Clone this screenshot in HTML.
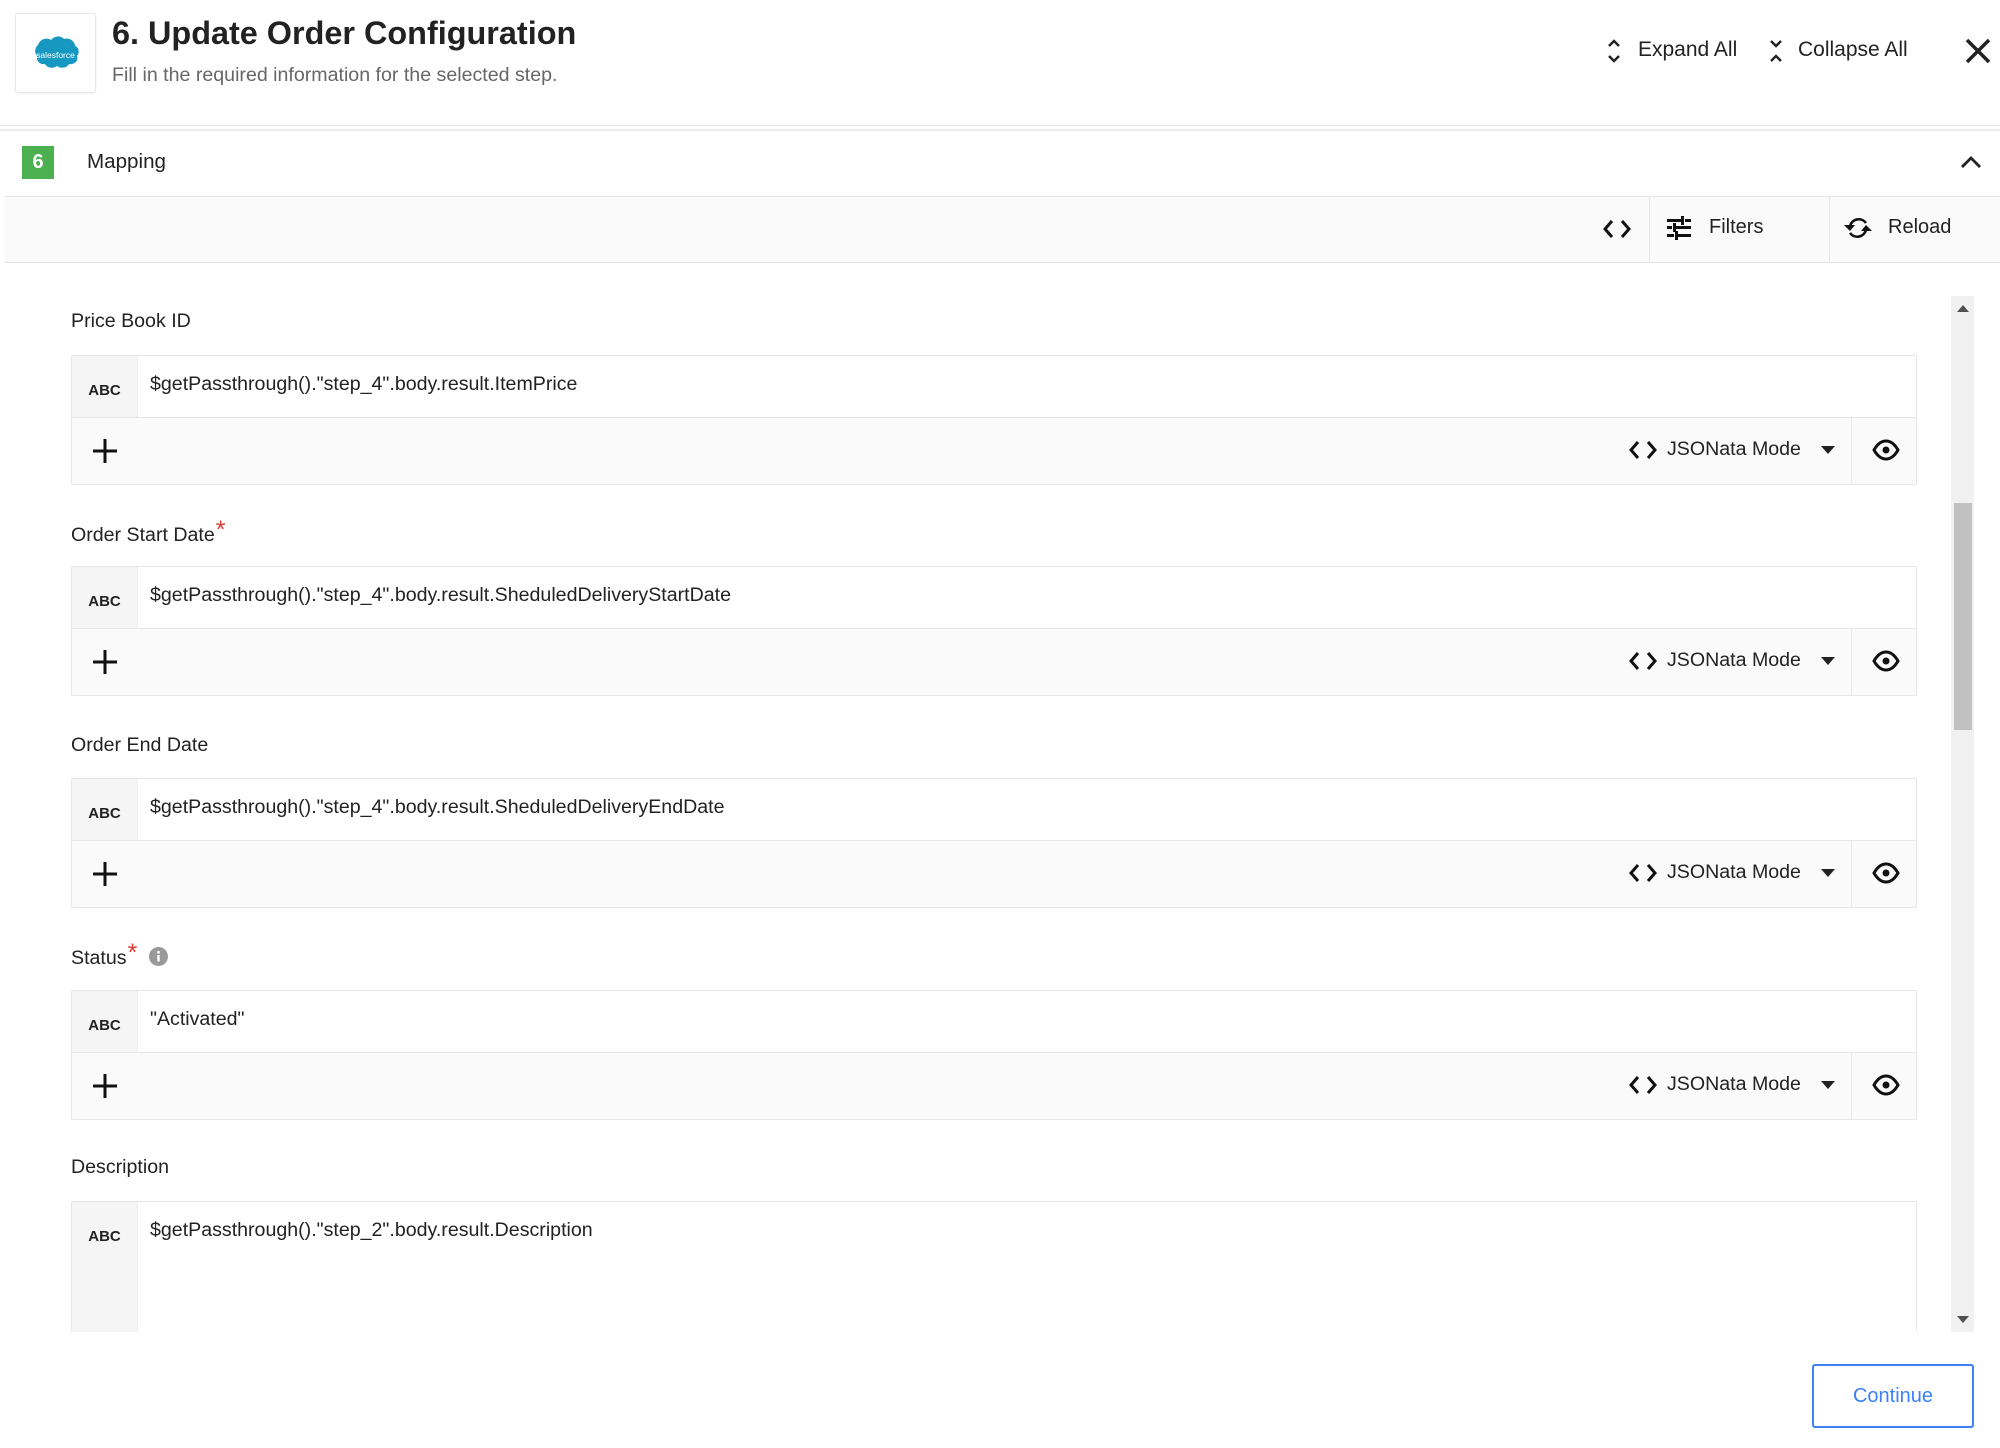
<!DOCTYPE html>
<html><head><meta charset="utf-8"><style>
*{box-sizing:border-box;margin:0;padding:0}
body{width:2000px;height:1448px;background:#fff;font-family:"Liberation Sans",Arial,sans-serif;color:#222;position:relative;overflow:hidden}
.a{position:absolute}
.lbl{position:absolute;left:71px;font-size:19.6px;color:#222;line-height:24px}
.star{color:#e53935;font-size:25px;position:relative;top:-3px;margin-left:1px}
.box{position:absolute;left:71px;width:1846px;border:1px solid #e6e6e6;border-radius:2px;background:#fff}
.inp{height:62px;position:relative;border-bottom:1px solid #e6e6e6}
.abc{position:absolute;left:0;top:0;bottom:0;width:66px;background:#f5f5f5;border-right:1px solid #eee;font-weight:bold;font-size:15px;text-align:center;padding-top:26px;color:#222}
.val{position:absolute;left:78px;top:17px;font-size:19.6px;color:#222}
.bot{height:66px;background:#fafafa;position:relative}
.plus{position:absolute;left:20px;top:20px}
.json{position:absolute;left:1556px;top:20px;font-size:19.6px;color:#222;display:flex;align-items:center}
.div{position:absolute;left:1779px;top:0;bottom:0;border-left:1px solid #eaeaea}
.eye{position:absolute;left:1800px;top:21px}
</style></head><body>
<div class="a" style="left:15px;top:13px;width:81px;height:80px;border:1px solid #e8e8e8;border-radius:3px;box-shadow:0 1px 2px rgba(0,0,0,.06)">
<svg width="79" height="78" viewBox="0 0 79 78"><path d="M22 31c2-6 9-8 13-5 3-4 10-5 13-1 5-2 11 2 11 7 4 1 5 7 2 10 2 5-3 9-8 8-2 4-8 5-12 2-4 3-10 2-12-2-5 1-9-3-8-8-3-3-2-9 1-11z" fill="#1798c1"/><text x="39.5" y="44" font-size="8.5" fill="#fff" text-anchor="middle" font-family="Liberation Sans">salesforce</text></svg></div>
<div class="a" style="left:112px;top:15px;font-size:32.4px;font-weight:bold;color:#222">6. Update Order Configuration</div>
<div class="a" style="left:112px;top:64px;font-size:19.6px;color:#666">Fill in the required information for the selected step.</div>
<svg class="a" style="left:1606px;top:38px" width="16" height="26" viewBox="0 0 16 26"><path d="M3 8l5-5 5 5M3 18l5 5 5-5" stroke="#222" stroke-width="2.4" fill="none"/></svg>
<div class="a" style="left:1638px;top:38px;font-size:21px;color:#222">Expand All</div>
<svg class="a" style="left:1768px;top:38px" width="16" height="26" viewBox="0 0 16 26"><path d="M3 3l5 5 5-5M3 23l5-5 5 5" stroke="#222" stroke-width="2.4" fill="none"/></svg>
<div class="a" style="left:1798px;top:38px;font-size:21px;color:#222">Collapse All</div>
<svg class="a" style="left:1965px;top:38px" width="26" height="26" viewBox="0 0 26 26"><path d="M2 2l22 22M24 2L2 24" stroke="#222" stroke-width="3.5"/></svg>
<div class="a" style="left:0;top:125px;width:2000px;border-top:1px solid #e6e6e6"></div>
<div class="a" style="left:0;top:129px;width:2000px;border-top:2px solid #eee"></div>
<div class="a" style="left:22px;top:146px;width:32px;height:33px;background:#4caf50;color:#fff;font-size:20px;font-weight:bold;text-align:center;line-height:33px">6</div>
<div class="a" style="left:87px;top:150px;font-size:20.6px;color:#222">Mapping</div>
<svg class="a" style="left:1960px;top:154px" width="22" height="16" viewBox="0 0 22 16"><path d="M2 13l9-9 9 9" stroke="#222" stroke-width="2.8" fill="none"/></svg>
<div class="a" style="left:5px;top:196px;width:1995px;height:67px;background:#fafafa;border-top:1px solid #e6e6e6;border-bottom:1px solid #e6e6e6"></div>
<div class="a" style="left:1649px;top:197px;height:65px;border-left:1px solid #e6e6e6"></div>
<div class="a" style="left:1829px;top:197px;height:65px;border-left:1px solid #e6e6e6"></div>
<svg class="a" style="left:1602px;top:218px" width="30" height="22" viewBox="0 0 30 22"><path d="M10 3l-7 8 7 8M20 3l7 8-7 8" stroke="#111" stroke-width="3" fill="none"/></svg>
<svg class="a" style="left:1666px;top:215px" width="26" height="26" viewBox="0 0 26 26" fill="#111"><rect x="1" y="4" width="14" height="3"/><rect x="19" y="4" width="6" height="3"/><rect x="15" y="1" width="3" height="9"/><rect x="1" y="11" width="5" height="3"/><rect x="10" y="11" width="15" height="3"/><rect x="7" y="8" width="3" height="9"/><rect x="1" y="19" width="7" height="3"/><rect x="12" y="19" width="13" height="3"/><rect x="9" y="16" width="3" height="9"/></svg>
<div class="a" style="left:1709px;top:216px;font-size:20px;color:#222">Filters</div>
<svg class="a" style="left:1843px;top:214px" width="30" height="28" viewBox="0 0 30 28"><path d="M7 12a9 9 0 0 1 16-3M23 16a9 9 0 0 1-16 3" stroke="#111" stroke-width="2.6" fill="none"/><path d="M1 11h11l-5 6zM29 17H18l5-6z" fill="#111"/></svg>
<div class="a" style="left:1888px;top:216px;font-size:20px;color:#222">Reload</div>
<div class="a" style="left:0;top:263px;width:2000px;height:1069px;overflow:hidden">
<div class="a" style="left:0;top:-263px;width:2000px;height:1332px">
<div class="lbl" style="top:309px">Price Book ID</div>
<div class="box" style="top:355px"><div class="inp"><div class="abc">ABC</div><div class="val">$getPassthrough()."step_4".body.result.ItemPrice</div></div>
<div class="bot"><svg class="plus" width="26" height="26"><path d="M13 1v24M1 13h24" stroke="#111" stroke-width="3"/></svg><div class="json"><svg width="30" height="22" viewBox="0 0 30 22"><path d="M10 3l-7 8 7 8M20 3l7 8-7 8" stroke="#111" stroke-width="3" fill="none"/></svg><span style="margin-left:9px">JSONata Mode</span><svg style="margin-left:20px" width="14" height="8"><path d="M0 0h14L7 8z" fill="#222"/></svg></div><div class="div"></div><svg class="eye" width="28" height="22" viewBox="0 0 28 22"><path d="M2 11C6 4 10 2 14 2s8 2 12 9c-4 7-8 9-12 9S6 18 2 11z" stroke="#111" stroke-width="3" fill="none"/><circle cx="14" cy="11" r="3.5" fill="#111"/></svg></div></div>

<div class="lbl" style="top:521px">Order Start Date<span class="star">*</span></div>
<div class="box" style="top:566px"><div class="inp"><div class="abc">ABC</div><div class="val">$getPassthrough()."step_4".body.result.SheduledDeliveryStartDate</div></div>
<div class="bot"><svg class="plus" width="26" height="26"><path d="M13 1v24M1 13h24" stroke="#111" stroke-width="3"/></svg><div class="json"><svg width="30" height="22" viewBox="0 0 30 22"><path d="M10 3l-7 8 7 8M20 3l7 8-7 8" stroke="#111" stroke-width="3" fill="none"/></svg><span style="margin-left:9px">JSONata Mode</span><svg style="margin-left:20px" width="14" height="8"><path d="M0 0h14L7 8z" fill="#222"/></svg></div><div class="div"></div><svg class="eye" width="28" height="22" viewBox="0 0 28 22"><path d="M2 11C6 4 10 2 14 2s8 2 12 9c-4 7-8 9-12 9S6 18 2 11z" stroke="#111" stroke-width="3" fill="none"/><circle cx="14" cy="11" r="3.5" fill="#111"/></svg></div></div>

<div class="lbl" style="top:733px">Order End Date</div>
<div class="box" style="top:778px"><div class="inp"><div class="abc">ABC</div><div class="val">$getPassthrough()."step_4".body.result.SheduledDeliveryEndDate</div></div>
<div class="bot"><svg class="plus" width="26" height="26"><path d="M13 1v24M1 13h24" stroke="#111" stroke-width="3"/></svg><div class="json"><svg width="30" height="22" viewBox="0 0 30 22"><path d="M10 3l-7 8 7 8M20 3l7 8-7 8" stroke="#111" stroke-width="3" fill="none"/></svg><span style="margin-left:9px">JSONata Mode</span><svg style="margin-left:20px" width="14" height="8"><path d="M0 0h14L7 8z" fill="#222"/></svg></div><div class="div"></div><svg class="eye" width="28" height="22" viewBox="0 0 28 22"><path d="M2 11C6 4 10 2 14 2s8 2 12 9c-4 7-8 9-12 9S6 18 2 11z" stroke="#111" stroke-width="3" fill="none"/><circle cx="14" cy="11" r="3.5" fill="#111"/></svg></div></div>

<div class="lbl" style="top:944px">Status<span class="star">*</span><svg style="margin-left:12px;vertical-align:-2px" width="19" height="19" viewBox="0 0 19 19"><circle cx="9.5" cy="9.5" r="9.5" fill="#999"/><rect x="8.3" y="8" width="2.4" height="6.5" fill="#fff"/><circle cx="9.5" cy="5.3" r="1.4" fill="#fff"/></svg></div>
<div class="box" style="top:990px"><div class="inp"><div class="abc">ABC</div><div class="val">"Activated"</div></div>
<div class="bot"><svg class="plus" width="26" height="26"><path d="M13 1v24M1 13h24" stroke="#111" stroke-width="3"/></svg><div class="json"><svg width="30" height="22" viewBox="0 0 30 22"><path d="M10 3l-7 8 7 8M20 3l7 8-7 8" stroke="#111" stroke-width="3" fill="none"/></svg><span style="margin-left:9px">JSONata Mode</span><svg style="margin-left:20px" width="14" height="8"><path d="M0 0h14L7 8z" fill="#222"/></svg></div><div class="div"></div><svg class="eye" width="28" height="22" viewBox="0 0 28 22"><path d="M2 11C6 4 10 2 14 2s8 2 12 9c-4 7-8 9-12 9S6 18 2 11z" stroke="#111" stroke-width="3" fill="none"/><circle cx="14" cy="11" r="3.5" fill="#111"/></svg></div></div>

<div class="lbl" style="top:1155px">Description</div>
<div class="box" style="top:1201px;height:131px;border-bottom:none"><div class="abc" style="bottom:0">ABC</div><div class="val">$getPassthrough()."step_2".body.result.Description</div></div>
</div></div>
<div class="a" style="left:1951px;top:296px;width:23px;height:1036px;background:#f1f1f1"></div>
<div class="a" style="left:1954px;top:503px;width:18px;height:227px;background:#c1c1c1"></div>
<svg class="a" style="left:1957px;top:305px" width="12" height="7"><path d="M0 7h12L6 0z" fill="#505050"/></svg>
<svg class="a" style="left:1957px;top:1316px" width="12" height="7"><path d="M0 0h12L6 7z" fill="#505050"/></svg>
<div class="a" style="left:1812px;top:1364px;width:162px;height:64px;border:2px solid #3b82f6;border-radius:3px;color:#3b82f6;font-size:20px;text-align:center;line-height:60px">Continue</div>
</body></html>
